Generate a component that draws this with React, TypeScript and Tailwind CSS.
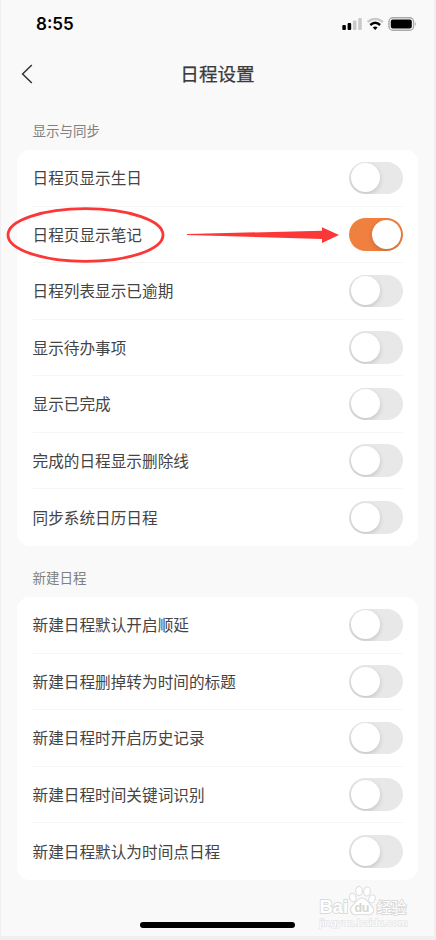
import { useState } from "react";

interface Item {
  label: string;
  on?: boolean;
}

interface SectionProps {
  title: string;
  items: Item[];
}

const syncItems: Item[] = [
  { label: "日程页显示生日" },
  { label: "日程页显示笔记", on: true },
  { label: "日程列表显示已逾期" },
  { label: "显示待办事项" },
  { label: "显示已完成" },
  { label: "完成的日程显示删除线" },
  { label: "同步系统日历日程" },
];

const createItems: Item[] = [
  { label: "新建日程默认开启顺延" },
  { label: "新建日程删掉转为时间的标题" },
  { label: "新建日程时开启历史记录" },
  { label: "新建日程时间关键词识别" },
  { label: "新建日程默认为时间点日程" },
];

const StatusBar = () => (
  <div className="h-12 pl-[35px] pr-[18px] flex items-center justify-between">
    <span className="text-[17px] leading-6 font-semibold text-black font-['Inter',sans-serif]">8:55</span>
    <svg width="75" height="16" viewBox="0 0 75 16" className="-mr-px">
      {/* 電波 */}
      <rect x="0.3" y="9" width="3.6" height="5" rx="1" fill="#000" />
      <rect x="5.6" y="7" width="3.6" height="7" rx="1" fill="#000" />
      <rect x="10.9" y="4.5" width="3.6" height="9.5" rx="1" fill="#c9c9c9" />
      <rect x="16.2" y="2" width="3.6" height="12" rx="1" fill="#c9c9c9" />
      {/* Wi-Fi */}
      <path d="M25.5 6 Q33.2 -0.3 40.9 6" fill="none" stroke="#c9c9c9" strokeWidth="2.3" />
      <path d="M28.3 9 Q33.2 4.6 38.1 9" fill="none" stroke="#000" strokeWidth="2.4" />
      <path d="M30.8 11.4 Q33.2 9.5 35.6 11.4 L33.2 14 Z" fill="#000" />
      {/* バッテリー */}
      <rect x="47" y="1.8" width="24.6" height="12.4" rx="3.8" fill="none" stroke="#a9a9a9" strokeWidth="1.4" />
      <rect x="48.8" y="3.6" width="21" height="8.8" rx="2" fill="#000" />
      <path d="M73 6 Q74.8 8 73 10 Z" fill="#a0a0a0" />
    </svg>
  </div>
);

const Toggle = ({ on = false }: { on?: boolean }) => {
  const [checked, setChecked] = useState(on);

  return (
    <button
      role="switch"
      aria-checked={checked}
      onClick={() => setChecked(!checked)}
      className={`w-[54px] h-[32.5px] rounded-full px-[2px] flex items-center overflow-hidden ${
        checked ? "justify-end bg-[#ef803f]" : "justify-start bg-[#e8e8e8]"
      }`}
    >
      <span className="size-[29px] rounded-full bg-white shadow-[0_2px_5px_rgba(0,0,0,0.16)]" />
    </button>
  );
};

const Section = ({ title, items }: SectionProps) => (
  <section>
    <h2 className="pl-4 h-[38px] text-[13.5px] leading-[36px] text-[#808080]">{title}</h2>
    <ul className="bg-white rounded-[13px] pl-4 pr-[15px]">
      {items.map((item, i) => (
        <li
          key={item.label}
          className={`h-[56.5px] flex items-center justify-between ${
            i < items.length - 1 ? "border-b border-[#f5f5f5]" : ""
          }`}
        >
          <span className="text-[15.65px] text-[#444]">{item.label}</span>
          <Toggle on={item.on} />
        </li>
      ))}
    </ul>
  </section>
);

const Watermark = () => (
  <svg width="96" height="46" viewBox="0 0 96 46" className="absolute left-[315px] top-[884px]">
    <g fill="#fff" stroke="#dedede" strokeWidth="1.1">
      <ellipse cx="36.8" cy="13.5" rx="3.2" ry="4.3" transform="rotate(-15 36.8 13.5)" />
      <ellipse cx="43" cy="7" rx="3.3" ry="4.6" />
      <ellipse cx="51" cy="7.5" rx="3.3" ry="4.5" transform="rotate(10 51 7.5)" />
      <ellipse cx="56" cy="14.8" rx="3.2" ry="4.1" transform="rotate(20 56 14.8)" />
      <path d="M46 14 C50 14 51.5 18 55 21 C60 26 57 31.2 52 30.7 C48 30.2 44 30.2 40.5 30.7 C35 31.2 32.5 25.5 37 21 C40.5 18 42 14 46 14 Z" />
    </g>
    <g fill="#fff" stroke="#dadada" strokeWidth="1.8" paintOrder="stroke" fontWeight="700">
      <text x="3.5" y="28.8" fontSize="18.5" textLength="28.5" lengthAdjust="spacingAndGlyphs" fontFamily="Liberation Sans, sans-serif">Bai</text>
      <text x="60.5" y="28.6" fontSize="15" textLength="30" fontFamily="Noto Sans CJK SC, sans-serif" fontWeight="400">经验</text>
    </g>
    <text x="38.5" y="28.3" fontSize="12.5" fontWeight="700" fill="#d6d6d6" textLength="15" fontFamily="Liberation Sans, sans-serif">du</text>
    <text x="3.5" y="42" fontSize="9" fill="#fff" stroke="#e6e6e6" strokeWidth="1.3" paintOrder="stroke" textLength="88" lengthAdjust="spacingAndGlyphs" fontFamily="Liberation Sans, sans-serif">jingyan.baidu.com</text>
  </svg>
);

const App = () => (
  <div className="relative w-[436px] h-[940px] overflow-hidden bg-[#f9f9f9] border-l border-r-2 border-b-4 border-[#efefef] font-['Noto_Sans_CJK_SC',sans-serif] flex flex-col">
    <StatusBar />
    <header className="h-[51px] px-5 grid grid-cols-[1fr_auto_1fr] items-center">
      <button aria-label="返回" className="justify-self-start">
        <svg width="12" height="20" viewBox="0 0 12 20" fill="none" stroke="#333" strokeWidth="1.5">
          <path d="M10.8 1 L1.6 10 L10.8 19" />
        </svg>
      </button>
      <h1 className="pb-0.5 text-[18.6px] font-normal text-[#3a3a3a] [-webkit-text-stroke:0.25px_#3a3a3a]">日程设置</h1>
    </header>

    <main className="mt-[13px] ml-[15.5px] w-[401.5px] flex flex-col gap-[13.5px]">
      <Section title="显示与同步" items={syncItems} />
      <Section title="新建日程" items={createItems} />
    </main>

    <div className="mt-auto mb-[8.5px] mx-auto w-[155px] h-[5.5px] rounded-full bg-black" />

    {/* 注釈の丸と矢印 */}
    <svg width="350" height="60" viewBox="0 0 350 60" className="absolute left-0 top-[205px] pointer-events-none">
      <ellipse cx="84.5" cy="30" rx="77.5" ry="26.3" fill="none" stroke="#fb3838" strokeWidth="2.8" />
      <path d="M186 29 L321 25.8 L321 22.2 L338 30 L321 38 L321 34 L186 30 Z" fill="#fb3838" />
    </svg>
    <Watermark />
  </div>
);

export default App;
